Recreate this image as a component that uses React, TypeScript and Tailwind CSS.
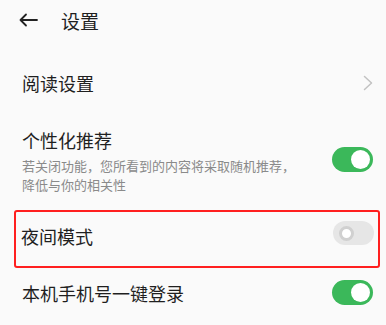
import React from "react";

function Toggle({ on }: { on: boolean }) {
  if (on) {
    return (
      <div className="w-[41px] h-[25px] rounded-full bg-[#3bb85a] flex items-center justify-end px-[3px] shrink-0">
        <div className="w-[19px] h-[19px] rounded-full bg-white" />
      </div>
    );
  }
  return (
    <div className="w-[41px] h-[24px] rounded-full bg-[#e6e6e6] flex items-center justify-start px-[6px] shrink-0">
      <div className="w-[15px] h-[15px] rounded-full border-[3px] border-[#d0d0d0] bg-white" />
    </div>
  );
}

export default function App() {
  return (
    <div
      className="w-[386px] h-[325px] bg-[#fafafa] text-[#1f1f1f] overflow-hidden"
      style={{ fontFamily: '"Noto Sans CJK SC", "Noto Sans", sans-serif' }}
    >
      <div className="h-[40px] flex items-center pl-[19px]">
        <svg width="19" height="14" viewBox="0 0 19 14" fill="none" stroke="#222" strokeWidth="1.8" strokeLinecap="round" strokeLinejoin="round">
          <path d="M18 7H1.5M7 1.5L1.5 7 7 12.5" />
        </svg>
        <span className="ml-[23px] text-[19px] leading-none">设置</span>
      </div>
      <div className="h-[44px] mt-[21px] flex items-center justify-between pl-[22px] pr-[13px]">
        <span className="text-[18px] leading-none">阅读设置</span>
        <svg width="10" height="16" viewBox="0 0 10 16" fill="none" stroke="#c2c2c2" strokeWidth="1.5" strokeLinecap="round" strokeLinejoin="round">
          <path d="M1.5 1.5L8.5 8 1.5 14.5" />
        </svg>
      </div>
      <div className="mt-[24px] flex items-center justify-between pl-[22px] pr-[13px]">
        <div className="flex flex-col">
          <span className="text-[18px] leading-[22px]">个性化推荐</span>
          <span className="mt-[5px] text-[13px] leading-[19px] text-[#8a8a8a] w-[280px]">
            若关闭功能，您所看到的内容将采取随机推荐，降低与你的相关性
          </span>
        </div>
        <div className="mb-[4px]">
          <Toggle on />
        </div>
      </div>
      <div className="mt-[16px] ml-[14px] mr-[6px] h-[58px] border-[2.5px] border-[#ff1f1f] rounded-[3px] flex items-start justify-between pl-[5px] pr-[4px] pt-[9px]">
        <span className="text-[18px] leading-[22px] mt-[4px]">夜间模式</span>
        <Toggle on={false} />
      </div>
      <div className="mt-[12px] flex items-center justify-between pl-[22px] pr-[13px]">
        <span className="text-[18px] leading-[22px]">本机手机号一键登录</span>
        <Toggle on />
      </div>
    </div>
  );
}
